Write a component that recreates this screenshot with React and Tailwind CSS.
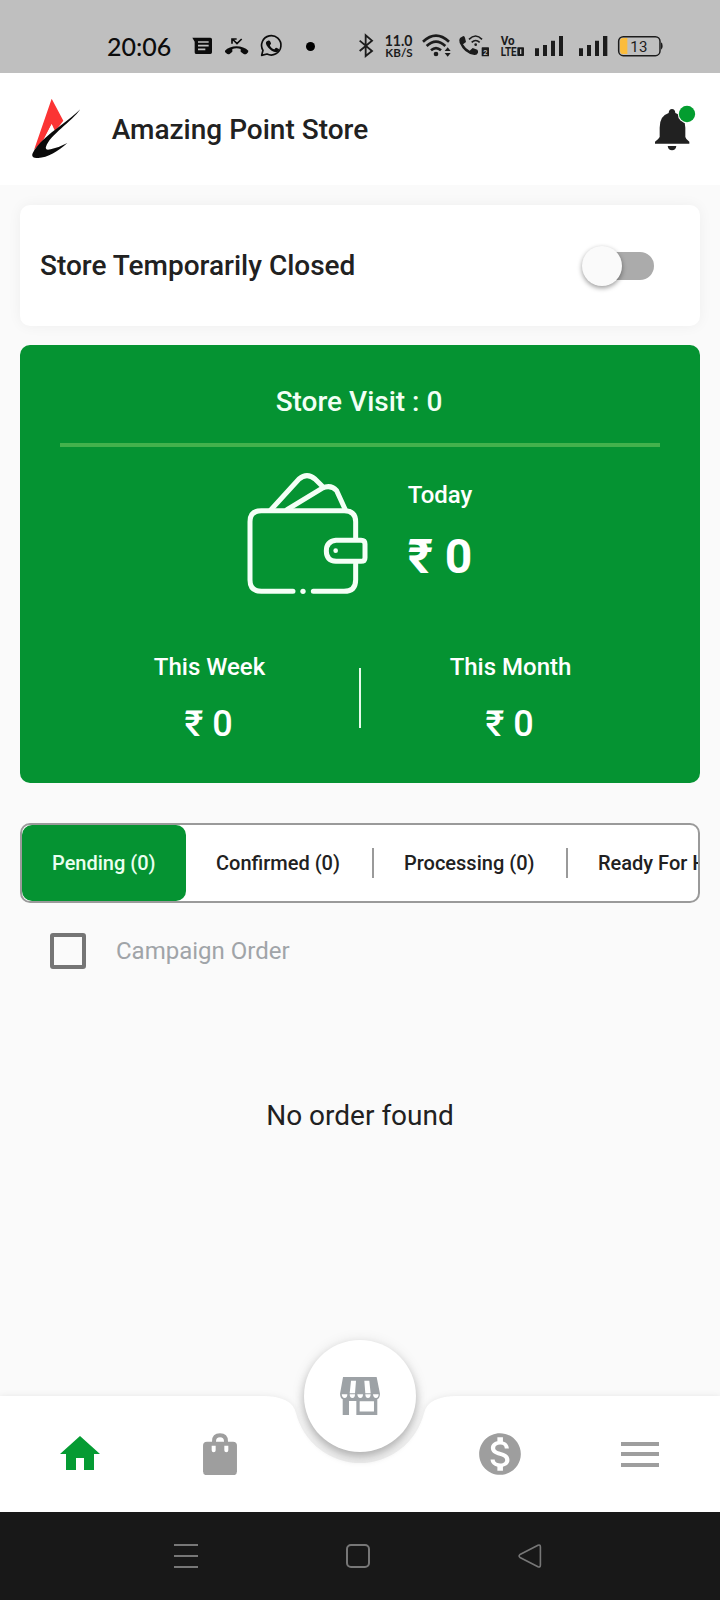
import React from "react";
import { MdMonetizationOn, MdHome } from "react-icons/md";

function StatusLeft() {
  return (
    <svg viewBox="300 0 300 165" className="h-[55px] w-[100px]" fill="#0c0c0c">
      <path d="M307 53h54q5 0 5 5v39q0 5-5 5h-43q-4 0-4-5V65z" />
      <path d="M324 66h32M324 77h32M324 88h22" stroke="#bfbfbf" strokeWidth="5" />
      <path d="M405 92C420 74 459 74 475 92Q476 97 470 101Q465 105 460 101L452 95V87Q440 82 427 87V95L419 102Q413 104 409 100Q403 96 405 92z" />
      <path d="M426 71V57h14M427 57l14 14 14-14" fill="none" stroke="#0c0c0c" strokeWidth="5" />
      <path d="M515 106l4-15A29 29 0 1 1 531 102z" fill="none" stroke="#0c0c0c" strokeWidth="5" strokeLinejoin="round" />
      <path d="M534 62c5-2 6 0 9 8 1 3-4 5-3 7 3 6 7 9 12 11 3 0 4-6 7-5 8 4 9 4 8 8-3 8-14 6-22 1-9-6-19-18-17-25q2-4 6-5z" />
    </svg>
  );
}

function StatusRight() {
  return (
    <svg viewBox="0 0 1020 165" className="h-[55px] w-[340px]" fill="#1c1c1c">
      <path d="M59 62l37 31-19 15V46l19 16-37 31" fill="none" stroke="#1c1c1c" strokeWidth="5.5" />
      <g fontFamily="Lato, sans-serif" fontWeight="700">
        <text x="134" y="79" fontSize="46" textLength="83" lengthAdjust="spacingAndGlyphs">11.0</text>
        <text x="136" y="112" fontSize="36" textLength="82" lengthAdjust="spacingAndGlyphs">KB/S</text>
      </g>
      <g fill="none" stroke="#1c1c1c" strokeWidth="8">
        <path d="M249 65q39-36 78 0" />
        <path d="M260 78q28-26 56 0" />
        <path d="M273 91q15-13 30 0" />
      </g>
      <circle cx="288" cy="102" r="7" />
      <path d="M314 93l9-11 9 11zM314 99l9 11 9-11z" />
      <path d="M360 54l10-6q4 0 5 5l3 13-9 7q8 14 20 19l9-8 14 5q3 3 2 9-3 8-11 7-30-4-44-36-3-10 1-15z" />
      <g fill="none" stroke="#1c1c1c" strokeWidth="5">
        <path d="M387 58q20-20 39 0" />
        <path d="M395 67q12-11 24 0" />
      </g>
      <circle cx="407" cy="74" r="4" />
      <rect x="425" y="82" width="22" height="27" rx="2" />
      <text x="430" y="104" fontSize="22" fontWeight="700" fill="#bfbfbf" fontFamily="Roboto, sans-serif">2</text>
      <g fontFamily="Roboto, sans-serif" fontWeight="700">
        <text x="482" y="74" fontSize="36" textLength="42" lengthAdjust="spacingAndGlyphs">Vo</text>
        <text x="482" y="108" fontSize="37" textLength="48" lengthAdjust="spacingAndGlyphs">LTE</text>
      </g>
      <rect x="532" y="82" width="20" height="26" rx="2" />
      <path d="M542 88v14" stroke="#bfbfbf" strokeWidth="4" />
      <path d="M585 85h12v23h-12zM609 75h12v33h-12zM633 62h12v46h-12zM657 48h12v60h-12z" />
      <path d="M717 85h12v23h-12zM741 75h12v33h-12zM765 62h12v46h-12zM789 48h13v60h-13z" />
      <path d="M850 54h12v48h-12q-10 0-10-10V64q0-10 10-10z" fill="#fbbc3c" />
      <rect x="836" y="50" width="124" height="57" rx="14" fill="none" stroke="#1c1c1c" strokeWidth="4.5" />
      <path d="M963 67q5 2 5 11t-5 11z" />
      <text x="871" y="95" fontSize="45" fontFamily="Roboto, sans-serif" textLength="51">13</text>
    </svg>
  );
}

function Logo() {
  return (
    <svg viewBox="96 84 146 182" className="h-[60.7px] w-[48.7px]">
      <path d="M155 86L190 152L176 170L165 183L155 162L130 210L102 240z" fill="#fb3434" />
      <path d="M155 163L163 186L130 212z" fill="#fff" />
      <path d="M241 118C215 155 150 195 138 230Q134 243 152 238Q178 232 202 219C174 245 140 264 112 264Q92 264 98 250C110 222 150 190 180 168Q218 140 241 118z" fill="#0a0a0a" />
    </svg>
  );
}

function Bell() {
  return (
    <svg viewBox="285 46 126 138" className="h-[46px] w-[42px]">
      <path d="M336 58q9 0 10 12 30 8 30 44v28q2 8 12 14v6H285v-6q10-6 14-14v-28q0-36 27-44 1-12 10-12z" fill="#212121" />
      <path d="M323 169h26q-2 13-13 13t-13-13z" fill="#212121" />
      <circle cx="381" cy="73" r="27.5" fill="#fff" />
      <circle cx="381" cy="73" r="24.5" fill="#039d2f" />
    </svg>
  );
}

function Wallet() {
  return (
    <svg viewBox="79 68 363 363" className="size-[121px]" fill="none" stroke="#f4fff6" strokeWidth="15" strokeLinecap="round" strokeLinejoin="round">
      <path d="M217 423H122Q88 423 88 389V214Q88 181 122 181H371Q405 181 405 214V264M405 341V388Q405 423 370 423H278" />
      <path d="M151 178L235 86Q259 66 283 86L305 108M199 178L304 114Q330 101 348 121L374 178" />
      <path d="M346 270H421Q433 270 433 281V322Q433 333 421 333H346Q317 331 317 302T346 270z" />
      <circle cx="345" cy="301" r="7" fill="#f4fff6" stroke="none" />
      <circle cx="247" cy="423" r="8" fill="#f4fff6" stroke="none" />
    </svg>
  );
}

function StoreIcon() {
  return (
    <svg viewBox="300 170 120 116" className="h-[38.6px] w-10" fill="#9da2a6">
      <path d="M309 170h101l10 50q0 12-8 17v49h-63v-44h-22v44h-19v-49q-8-5-8-17z" />
      <path d="M333 181h15l-3 38h-16zM373 181h15l4 38h-16zM359 243h43v31h-43z" fill="#fff" />
      <path d="M305 222h17q0 11-8 11t-9-11zM329 222h16q0 11-8 11t-8-11zM352 222h17q0 11-8 11t-9-11zM376 222h16q0 11-8 11t-8-11zM399 222h17q0 11-8 11t-9-11z" fill="#fff" />
    </svg>
  );
}

function BagIcon() {
  return (
    <svg viewBox="609 159 102 128" className="h-[42.6px] w-[34px]">
      <path d="M642 190v-6q0-18 18-18t18 18v6" fill="none" stroke="#9e9e9e" strokeWidth="12" />
      <rect x="609" y="185" width="102" height="101" rx="12" fill="#9e9e9e" />
      <path d="M635 197h12v14q0 6-6 6t-6-6zM673 197h12v14q0 6-6 6t-6-6z" fill="#fff" />
    </svg>
  );
}

function Period({ label }) {
  return (
    <div className="flex flex-1 flex-col items-center text-white">
      <div className="text-2xl leading-7 font-medium">{label}</div>
      <div className="mt-[22px] pr-0.5 text-4xl leading-[42px] font-medium">₹ 0</div>
    </div>
  );
}

function TabDivider() {
  return <div className="h-[30px] w-0.5 shrink-0 bg-[#9a9a9a]" />;
}

export default function App() {
  return (
    <div className="flex h-[1600px] w-[720px] flex-col overflow-hidden bg-[#fafafa] font-[Roboto,sans-serif] text-[#212121]">
      <div className="flex h-[73px] shrink-0 bg-[#bfbfbf]">
        <div className="w-[190px] shrink-0 pt-[30px] pl-[107px] font-[Lato,sans-serif] text-[25px] leading-8 font-medium text-[#0c0c0c]">20:06</div>
        <div className="flex shrink-0 pt-5">
          <StatusLeft />
        </div>
        <div className="mt-[42px] mr-[25px] ml-4 size-[9px] shrink-0 rounded-full bg-black" />
        <div className="flex shrink-0 pt-5">
          <StatusRight />
        </div>
      </div>

      <header className="flex h-28 shrink-0 items-center bg-white pr-[23px] pl-8">
        <div className="-mt-0.5">
          <Logo />
        </div>
        <h1 className="ml-[31px] flex-1 pt-0.5 text-[28px] font-medium">Amazing Point Store</h1>
        <div className="-mt-0.5">
          <Bell />
        </div>
      </header>

      <main className="flex flex-1 flex-col px-5 pt-5">
        <section className="flex h-[121px] shrink-0 items-center justify-between rounded-[10px] bg-white pr-[46px] pl-5 shadow-[0_0_14px_rgba(0,0,0,0.05)]">
          <span className="pt-px text-[28px] font-medium">Store Temporarily Closed</span>
          <div className="flex h-7 w-[66px] items-center rounded-full bg-[#ababab]">
            <div className="-ml-1.5 size-10 rounded-full bg-[#fafafa] shadow-[0_2px_5px_rgba(0,0,0,0.4)]" />
          </div>
        </section>

        <section className="mt-[19px] flex h-[438px] shrink-0 flex-col rounded-[10px] bg-[#059332] px-10 pt-10">
          <div className="pr-0.5 text-center text-[28px] leading-[33px] font-medium text-[#f2fff5]">Store Visit : 0</div>
          <div className="mt-[25px] h-1 bg-[#43b24c]" />
          <div className="mt-[26px] flex justify-center gap-10 pr-px">
            <Wallet />
            <div className="pt-2 text-white">
              <div className="text-2xl leading-7 font-medium">Today</div>
              <div className="mt-5 text-5xl leading-[56px] font-bold">₹ 0</div>
            </div>
          </div>
          <div className="mt-[59px] flex">
            <Period label="This Week" />
            <div className="mt-[15px] h-[60px] w-0.5 bg-[#e6fbea]" />
            <Period label="This Month" />
          </div>
        </section>

        <section className="mt-10 flex h-20 shrink-0 items-center overflow-hidden rounded-[10px] border-2 border-[#9a9a9a] bg-white text-xl font-medium whitespace-nowrap">
          <div className="flex h-full w-[164px] shrink-0 items-center rounded-[10px] bg-[#059332] pl-[30px] text-[#eafff0]">Pending (0)</div>
          <div className="w-[186px] shrink-0 pl-[30px]">Confirmed (0)</div>
          <TabDivider />
          <div className="w-[192px] shrink-0 pl-[30px]">Processing (0)</div>
          <TabDivider />
          <div className="shrink-0 pl-[30px]">Ready For Handover (0)</div>
        </section>

        <div className="mt-[30px] ml-[30px] flex items-center">
          <div className="size-9 rounded-[3px] border-4 border-[#757575]" />
          <span className="ml-[30px] text-2xl text-[#a0a4a8]">Campaign Order</span>
        </div>

        <p className="mt-[130px] text-center text-[28px] leading-[34px]">No order found</p>
      </main>

      <nav className="relative h-[116px] shrink-0">
        <svg viewBox="0 0 720 116" className="absolute inset-0 h-full w-full overflow-visible drop-shadow-[0_0_3px_rgba(0,0,0,0.08)]">
          <path d="M0 0H262Q292 0 295.94 17A66 66 0 0 0 424.06 17Q428 0 458 0H720V116H0z" fill="#fff" />
        </svg>
        <div className="relative flex h-full items-center px-2.5">
          <div className="flex flex-1 justify-center"><MdHome className="size-12 text-[#059b33]" /></div>
          <div className="flex flex-1 justify-center"><BagIcon /></div>
          <div className="flex flex-1 justify-center self-start">
            <div className="-mt-14 flex size-28 items-center justify-center rounded-full bg-white shadow-[0_6px_10px_rgba(0,0,0,0.24),0_1px_14px_rgba(0,0,0,0.1)]">
              <StoreIcon />
            </div>
          </div>
          <div className="flex flex-1 justify-center"><MdMonetizationOn className="size-[50px] text-[#9e9e9e]" /></div>
          <div className="flex flex-1 justify-center">
            <div className="flex w-[38px] flex-col gap-[6.5px]">
              <div className="h-1 bg-[#9e9e9e]" />
              <div className="h-1 bg-[#9e9e9e]" />
              <div className="h-1 bg-[#9e9e9e]" />
            </div>
          </div>
        </div>
      </nav>

      <footer className="relative flex h-[88px] shrink-0 items-center bg-[#181818] pl-[174px]">
        <svg viewBox="0 0 24 24" className="size-6" stroke="#777" strokeWidth="2"><path d="M0 1h24M0 12h24M0 23h24" /></svg>
        <div className="ml-[148px] size-6 rounded-[5px] border-2 border-[#777]" />
        <svg viewBox="0 0 24 24" className="ml-[148px] size-6" fill="none" stroke="#777" strokeWidth="1.6" strokeLinejoin="round">
          <path d="M2 10.5L20 1.2Q22.4 .4 22.4 3V21Q22.4 23.6 20 22.8L2 13.5Q.2 12 2 10.5z" />
        </svg>
      </footer>
    </div>
  );
}
